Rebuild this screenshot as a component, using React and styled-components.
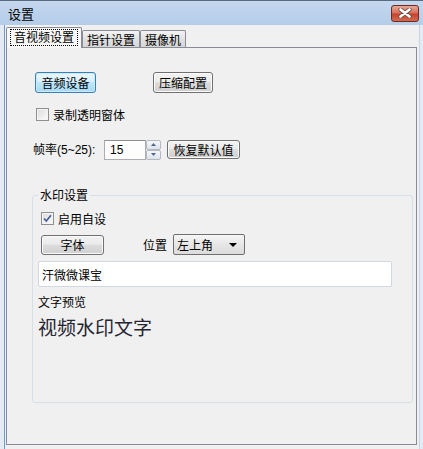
import React from 'react';
import styled, { createGlobalStyle } from 'styled-components';

const GlobalStyle = createGlobalStyle`
  html, body {
    margin: 0;
    padding: 0;
    background: #f0f0f0;
    overflow: hidden;
  }
  body {
    font-family: "Liberation Sans", "Noto Sans CJK SC", sans-serif;
    font-size: 12px;
    color: #000;
  }
`;

const Window = styled.div`
  width: 423px;
  height: 449px;
  display: flex;
  flex-direction: column;
  background: #f0f0f0;
`;

const TitleBar = styled.div`
  height: 25px;
  box-sizing: border-box;
  border-top: 1px solid #5a6b80;
  background: linear-gradient(#c4d8ef, #b5cce8);
  display: flex;
  align-items: center;
  justify-content: space-between;
  padding: 0 4px 0 8px;
`;

const Title = styled.span`
  font-family: "Noto Sans CJK SC", sans-serif;
  font-size: 13px;
  line-height: 15px;
  color: #000;
`;

const CloseButton = styled.div`
  width: 28px;
  height: 17px;
  box-sizing: border-box;
  border: 1px solid #6a2c24;
  border-radius: 3px;
  background: linear-gradient(#e9a896, #d8705c 45%, #c8432d 55%, #d36b52);
  display: flex;
  align-items: center;
  justify-content: center;
`;

const Frame = styled.div`
  flex: 1;
  display: flex;
  padding: 0 3px 0 4px;
  background: #e4ebf4;
`;

const Client = styled.div`
  flex: 1;
  display: flex;
  flex-direction: column;
  background: #f0f0f0;
  border-left: 1px solid #7399cc;
  border-right: 1px solid #c5d5e9;
`;

const TabStrip = styled.div`
  display: flex;
  align-items: flex-end;
  height: 21px;
  margin: 2px 0 0 1px;
`;

const Tab = styled.div`
  box-sizing: border-box;
  width: ${p => p.$w}px;
  height: ${p => (p.$active ? 21 : 18)}px;
  border: 1px solid #898c95;
  border-bottom: none;
  border-radius: 2px 2px 0 0;
  background: ${p => (p.$active ? '#f7f7f7' : 'linear-gradient(#f4f4f4, #e0e0e0 50%, #d6d6d6)')};
  position: relative;
  z-index: ${p => (p.$active ? 2 : 0)};
  display: flex;
  align-items: center;
  justify-content: center;
  font-family: "Noto Sans CJK SC", sans-serif;
  font-size: 12px;
  line-height: 14px;
  padding-bottom: ${p => (p.$active ? 2 : 0)}px;
`;

const FocusText = styled.span`
  border: 1px dotted #000;
  padding: 0 3px 1px;
`;

const Panel = styled.div`
  box-sizing: border-box;
  margin: -1px 0 0 1px;
  width: 411px;
  height: 398px;
  border: 1px solid #898c95;
  background: #f0f0f0;
  position: relative;
  z-index: 1;
  display: flex;
  flex-direction: column;
  padding: 24px 0 0 26px;
`;

const Row = styled.div`
  display: flex;
  align-items: center;
  height: ${p => p.$h || 21}px;
  margin-top: ${p => p.$mt || 0}px;
  margin-left: ${p => p.$ml || 0}px;
`;

const Button = styled.div`
  box-sizing: border-box;
  width: ${p => p.$w}px;
  height: ${p => p.$h || 21}px;
  margin-left: ${p => p.$ml || 0}px;
  border: 1px solid ${p => (p.$default ? '#3c7fb1' : '#707070')};
  border-radius: 3px;
  background: ${p =>
    p.$default
      ? 'linear-gradient(#eaf6fd, #d9f0fc 45%, #bee6fd 50%, #a7d9f5)'
      : 'linear-gradient(#f2f2f2, #ebebeb 45%, #dddddd 50%, #cfcfcf)'};
  box-shadow: inset 0 0 0 1px ${p => (p.$default ? '#c8eafd' : '#fbfbfb')};
  display: flex;
  align-items: center;
  justify-content: center;
  font-family: "Noto Sans CJK SC", sans-serif;
  font-size: 12px;
  line-height: 14px;
`;

const Box = styled.span`
  box-sizing: border-box;
  width: 13px;
  height: 13px;
  border: 1px solid #8e8f8f;
  background: linear-gradient(135deg, #dcdcdc, #fbfbfb);
  box-shadow: inset 0 0 0 1px #f4f4f4;
  display: inline-flex;
  flex-shrink: 0;
`;

const Label = styled.span`
  font-family: "Noto Sans CJK SC", sans-serif;
  font-size: 12px;
  line-height: 14px;
  margin-left: ${p => p.$ml || 0}px;
  width: ${p => (p.$w ? `${p.$w}px` : 'auto')};
  flex-shrink: 0;
`;

const LatinLabel = styled(Label)`
  font-family: "Liberation Sans", "Noto Sans CJK SC", sans-serif;
`;

const NumberBox = styled.div`
  box-sizing: border-box;
  width: 42px;
  height: 20px;
  border: 1px solid #abadb3;
  border-top-color: #8e9096;
  background: #fdfdfd;
  display: flex;
  align-items: center;
  padding-left: 5px;
  font-family: "Liberation Sans", sans-serif;
  font-size: 12px;
`;

const Spinner = styled.div`
  display: flex;
  flex-direction: column;
  width: 15px;
  height: 20px;
`;

const SpinHalf = styled.div`
  box-sizing: border-box;
  height: 10px;
  border: 1px solid #b5b8c0;
  border-radius: 2px;
  background: linear-gradient(#f5f7fa, #dde3ec);
  display: flex;
  align-items: center;
  justify-content: center;
`;

const GroupBox = styled.fieldset`
  box-sizing: border-box;
  margin: 28px 0 0 -1px;
  width: 381px;
  height: 215px;
  border: 1px solid #d5dfe5;
  border-radius: 3px;
  padding: 0 0 0 5px;
  min-width: 0;
  display: flex;
  flex-direction: column;
`;

const Legend = styled.legend`
  padding: 0 2px;
  font-family: "Noto Sans CJK SC", sans-serif;
  font-size: 12px;
  line-height: 14px;
`;

const Select = styled.div`
  box-sizing: border-box;
  width: 72px;
  height: 21px;
  margin-left: 6px;
  border: 1px solid #707070;
  border-radius: 2px;
  background: linear-gradient(#f6f6f6, #e6e6e6 50%, #dcdcdc);
  display: flex;
  align-items: center;
  justify-content: space-between;
  padding: 0 7px 0 3px;
  font-family: "Noto Sans CJK SC", sans-serif;
  font-size: 12px;
`;

const TextInput = styled.div`
  box-sizing: border-box;
  width: 354px;
  height: 26px;
  margin-top: 5px;
  border: 1px solid #d0d8e2;
  border-radius: 2px;
  background: #fff;
  display: flex;
  align-items: center;
  padding-left: 3px;
  font-family: "Noto Sans CJK SC", sans-serif;
  font-size: 12px;
`;

const Caption = styled.div`
  margin-top: 8px;
  font-family: "Noto Sans CJK SC", sans-serif;
  font-size: 12px;
  line-height: 14px;
`;

const Preview = styled.div`
  margin-top: 6px;
  font-family: "Noto Sans CJK SC", sans-serif;
  font-size: 19px;
  line-height: 24px;
  color: #262632;
`;

function CheckBox({ checked }) {
  return (
    <Box>
      {checked && (
        <svg width="11" height="11" viewBox="0 0 11 11">
          <path d="M2 5.5 L4.3 8 L9 2.2" fill="none" stroke="#4a5e9e" strokeWidth="1.7" />
        </svg>
      )}
    </Box>
  );
}

function Arrow({ up }) {
  return (
    <svg width="5" height="3" viewBox="0 0 5 3">
      <path d={up ? 'M0 3 L2.5 0 L5 3 Z' : 'M0 0 L2.5 3 L5 0 Z'} fill="#4d6790" />
    </svg>
  );
}

export default function App() {
  return (
    <>
      <GlobalStyle />
      <Window>
        <TitleBar>
          <Title>设置</Title>
          <CloseButton>
            <svg width="14" height="10" viewBox="0 0 14 10">
              <path d="M2.5 1.5 L11.5 8.5 M11.5 1.5 L2.5 8.5" stroke="#6b4a44" strokeWidth="4.2" strokeLinecap="round" />
              <path d="M2.5 1.5 L11.5 8.5 M11.5 1.5 L2.5 8.5" stroke="#fff" strokeWidth="2.6" strokeLinecap="round" />
            </svg>
          </CloseButton>
        </TitleBar>
        <Frame>
          <Client>
            <TabStrip>
              <Tab $active $w={76}>
                <FocusText>音视频设置</FocusText>
              </Tab>
              <Tab $w={58}>指针设置</Tab>
              <Tab $w={46}>摄像机</Tab>
            </TabStrip>
            <Panel>
              <Row>
                <Button $default $w={61} $ml={2}>音频设备</Button>
                <Button $w={60} $ml={57}>压缩配置</Button>
              </Row>
              <Row $h={13} $mt={15} $ml={3}>
                <CheckBox />
                <Label $ml={4}>录制透明窗体</Label>
              </Row>
              <Row $mt={18}>
                <LatinLabel $w={71}>帧率(5~25):</LatinLabel>
                <NumberBox>15</NumberBox>
                <Spinner>
                  <SpinHalf><Arrow up /></SpinHalf>
                  <SpinHalf><Arrow /></SpinHalf>
                </Spinner>
                <Button $w={73} $h={19} $ml={6}>恢复默认值</Button>
              </Row>
              <GroupBox>
                <Legend>水印设置</Legend>
                <Row $h={13} $mt={10} $ml={3}>
                  <CheckBox checked />
                  <Label $ml={4}>启用自设</Label>
                </Row>
                <Row $h={23} $mt={8}>
                  <Button $w={63} $h={20} $ml={3}>字体</Button>
                  <Label $ml={39}>位置</Label>
                  <Select>
                    <span>左上角</span>
                    <svg width="8" height="4" viewBox="0 0 8 4">
                      <path d="M0 0 L8 0 L4 4 Z" fill="#000" />
                    </svg>
                  </Select>
                </Row>
                <TextInput>汗微微课宝</TextInput>
                <Caption>文字预览</Caption>
                <Preview>视频水印文字</Preview>
              </GroupBox>
            </Panel>
          </Client>
        </Frame>
      </Window>
    </>
  );
}
